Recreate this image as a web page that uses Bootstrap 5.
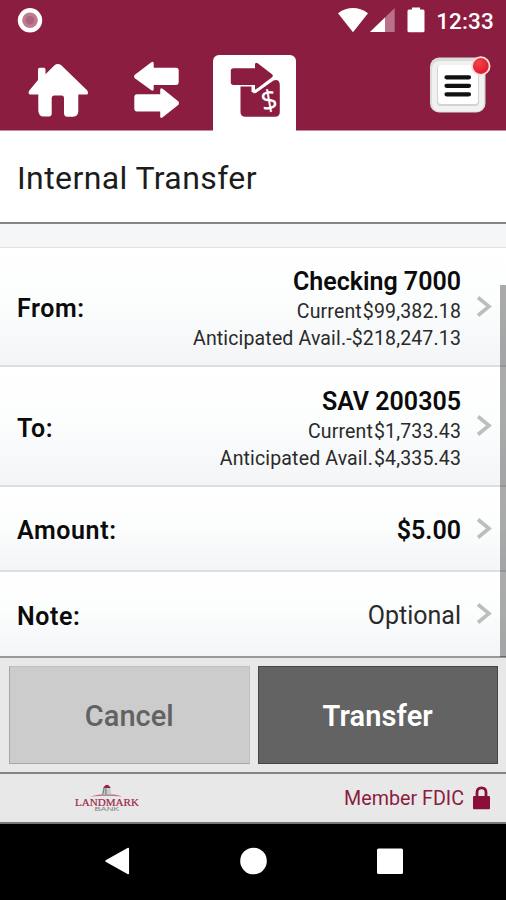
<!DOCTYPE html>
<html lang="en">
<head>
<meta charset="utf-8">
<meta name="viewport" content="width=device-width, initial-scale=1">
<title>Internal Transfer</title>
<link href="https://cdn.jsdelivr.net/npm/bootstrap@5.3.0/dist/css/bootstrap.min.css" rel="stylesheet">
<style>
body{font-family:Roboto,"Liberation Sans",sans-serif;color:#0b0b0b;background:#fff;overflow:hidden}
svg{display:block;flex:none}
.phone-screen{width:506px;height:900px}
.status-strip{height:41px;background:#8b1d40;padding:0 12px 0 17px}
.clock-text{font-size:22.5px;font-weight:500;color:#fff;letter-spacing:.15px;line-height:42px;margin-left:11px}
.app-tabs{height:90px;background:#8b1d40;border-bottom:1px solid #c58d9f;padding-left:16px;padding-right:14px}
.tab-link{width:83px;height:76px;padding:0}
.tab-current{background:#fff;border-radius:6px 6px 0 0;margin-bottom:-1px;margin-left:-1px}
.tab-gap{width:16px}
.page-head{height:93px;border-bottom:2px solid #858585}
.page-head h1{font-size:32px;font-weight:400;line-height:94px;padding-left:17px;letter-spacing:.4px;color:#1c1c1c}
.form-gap{height:24px;background:#f4f6f7;border-bottom:1px solid #e0e2e4}
.form-line{background:linear-gradient(#fff,#fcfdfd 45%,#f3f5f7);border-bottom:2px solid #dcdfe1;padding:0 14px 0 17px}
.line-from{height:119px}
.line-to{height:120px}
.line-amount{height:85px}
.line-last{height:84px;border-bottom:0}
.line-label{font-size:25px;font-weight:600;line-height:30px;letter-spacing:.6px;padding-top:5px}
.line-strong{font-size:25px;font-weight:600;line-height:32px}
.line-sub{font-size:19.5px;line-height:27px;color:#2a2a2a;letter-spacing:.15px;font-weight:400}
.line-sub span+span{margin-left:1px}
.line-sub .flush{margin-left:0!important}
.line-value{padding-top:4px}
.line-to .line-value{padding-top:5px}
.line-note{font-size:25px;line-height:30px;color:#2a2a2a;font-weight:400;padding-top:4px}
.chevron{margin-left:14px}
.scroll-thumb{right:0;top:285px;width:6px;height:372px;background:rgba(0,0,0,.33)}
.action-bar{height:118px;background:#e8e8e8;border-top:2px solid #999;border-bottom:2px solid #858585;padding:8px 8px 8px 9px;gap:8px}
.action-btn{font-size:29px;font-weight:500;border-radius:0;padding:4px 0 0;flex:1 1 0}
.btn-cancel,.btn-cancel:hover{background:#ccc;border:1px solid #a6a6a6;border-top-color:#c0c0c0;border-right-color:#c0c0c0;color:#626262}
.btn-send,.btn-send:hover{background:#636363;border:1px solid #454545;color:#fff;font-weight:600;letter-spacing:.1px}
.foot-bar{height:50px;background:#e8e8e8;border-bottom:2px solid #777;padding:0 16px 0 70px}
.fdic-text{font-size:19.7px;color:#8b1d40;font-weight:400;margin-right:9px;padding-top:1px}
.system-nav{background:#000;padding:0 103px 2px 105px}
</style>
</head>
<body>
<main class="phone-screen d-flex flex-column position-relative">
<header>
  <div class="status-strip d-flex align-items-center">
    <svg width="26" height="41" viewBox="0 0 26 41"><circle cx="13" cy="20.300" r="12.200" fill="#fff"/><circle cx="13" cy="20.300" r="7.800" fill="#bd7a91"/><circle cx="13" cy="20.300" r="4.200" fill="#a9547a" opacity=".65"/></svg>
    <svg class="ms-auto" width="88" height="41" viewBox="337 0 88 41"><path d="M338 13.200Q353 3 368 13.200L353 32.200Z" fill="#fff"/><path d="M394.700 8V32H370Z" fill="#b9708a"/><path d="M385 17.500V32H370Z" fill="#fff"/><path d="M412 7.500h8v2h3q1.500 0 1.500 1.500v20q0 1.300-1.500 1.300h-14q-1.500 0-1.500-1.300v-20q0-1.500 1.500-1.500h3z" fill="#fff"/></svg>
    <span class="clock-text">12:33</span>
  </div>
  <nav class="app-tabs d-flex align-items-end">
    <a href="#" class="tab-link" aria-label="Home"><svg width="83" height="76" viewBox="16 54 83 76"><path fill="#fff" d="M38 80V70q0-2.300 1.700-2.300H44q1.500 0 1.500 2v4.600L54.500 65.200q3.300-2.500 6.800 0L87.300 90.500q1.800 3.900-.8 4H78.300V112q-.8 4.500-5 4.700H67Q64 116.700 64 113V98q0-2.500-2-2.500H54Q51.700 95.500 51.700 98v15.500q0 3-2.700 3H43.500Q39 116.500 38.300 111V94.500H30Q27.500 94 29.300 90.500Z"/></svg></a>
    <span class="tab-gap"></span>
    <a href="#" class="tab-link" aria-label="Transfers"><svg width="83" height="76" viewBox="115 54 83 76"><path fill="#fff" d="M134.500 75L151 62.500q2.500-2 2.700.7v4.600H176q2.700 0 2.700 2.700V82q0 3-2.700 3H153.700v4q-.3 3-2.700 1L134.500 78q-1-1.500 0-3zM178.500 101.500L163 89q-2.500-2-2.800.8v4.500H137q-2.700 0-2.700 3V108.500q0 3 2.700 3h23.200v5q.3 2.500 2.800.5L178.500 104.700q1-1.700 0-3.200z"/></svg></a>
    <span class="tab-gap"></span>
    <a href="#" class="tab-link tab-current" aria-label="Internal transfer"><svg width="83" height="76" viewBox="213 55 83 76"><path fill="#8b1d40" d="M240.500 86.500H251.500V92L255.500 93.300 273.500 80.500q6-1.800 6.300 4.500V112q0 4.700-4.700 4.700H245.500q-5 0-5-4.700z"/><path fill="#8b1d40" d="M233.500 68.300H255V64.500q.2-3 2.700-1.200L272 74.200q1.700 1.500 0 3L258.500 87.500l-3.500 2.300V85H233.500q-2.700 0-2.700-2.700V71q0-2.700 2.700-2.700z"/><path d="M251.500 85.800H254.300V92.500L273.500 78.700" fill="none" stroke="#fff" stroke-width="1.400"/><text x="261" y="110.500" font-family="'Noto Sans','Open Sans',sans-serif" font-size="28.500" fill="#fff" transform="rotate(-10 269 101)">$</text></svg></a>
    <a href="#" class="ms-auto" aria-label="Menu"><svg width="64" height="76" viewBox="428 54 64 76"><defs><radialGradient id="dotFill" cx=".35" cy=".3" r=".9"><stop offset="0" stop-color="#f2434d"/><stop offset="1" stop-color="#d9121f"/></radialGradient></defs><rect x="430" y="57.500" width="55.500" height="55" rx="9" fill="#dcdcdc"/><rect x="432" y="61" width="52" height="50.500" rx="8" fill="#f1f1f1"/><rect x="437" y="65" width="42" height="41" rx="4" fill="#d2d4d4"/><rect x="438" y="65" width="40" height="39" rx="3" fill="#fff"/><path d="M446.500 77.300h22.500M446.500 85.800h22.500M446.500 94.300h22.500" stroke="#111" stroke-width="4.200" stroke-linecap="round"/><circle cx="480.800" cy="66" r="9.700" fill="#f6dede"/><circle cx="480.800" cy="66" r="7.900" fill="url(#dotFill)"/></svg></a>
  </nav>
</header>
<section class="page-head"><h1 class="m-0">Internal Transfer</h1></section>
<div class="form-gap"></div>
<section>
  <div class="form-line line-from d-flex align-items-center"><span class="line-label">From:</span><div class="line-value ms-auto text-end"><div class="line-strong">Checking 7000</div><div class="line-sub"><span>Current</span><span>$99,382.18</span></div><div class="line-sub"><span>Anticipated Avail.</span><span class="flush">-$218,247.13</span></div></div><svg class="chevron" width="17" height="24" viewBox="0 0 17 24"><path d="M3 2.500L14 11.500 3 20.500" fill="none" stroke="#bdbdbd" stroke-width="3.600"/></svg></div>
  <div class="form-line line-to d-flex align-items-center"><span class="line-label">To:</span><div class="line-value ms-auto text-end"><div class="line-strong">SAV 200305</div><div class="line-sub"><span>Current</span><span>$1,733.43</span></div><div class="line-sub"><span>Anticipated Avail.</span><span>$4,335.43</span></div></div><svg class="chevron" width="17" height="24" viewBox="0 0 17 24"><path d="M3 2.500L14 11.500 3 20.500" fill="none" stroke="#bdbdbd" stroke-width="3.600"/></svg></div>
  <div class="form-line line-amount d-flex align-items-center"><span class="line-label">Amount:</span><span class="line-strong line-value ms-auto">$5.00</span><svg class="chevron" width="17" height="24" viewBox="0 0 17 24"><path d="M3 2.500L14 11.500 3 20.500" fill="none" stroke="#bdbdbd" stroke-width="3.600"/></svg></div>
  <div class="form-line line-last d-flex align-items-center"><span class="line-label">Note:</span><span class="line-note ms-auto">Optional</span><svg class="chevron" width="17" height="24" viewBox="0 0 17 24"><path d="M3 2.500L14 11.500 3 20.500" fill="none" stroke="#bdbdbd" stroke-width="3.600"/></svg></div>
</section>
<div class="scroll-thumb position-absolute"></div>
<div class="action-bar d-flex"><button type="button" class="btn action-btn btn-cancel">Cancel</button><button type="button" class="btn action-btn btn-send">Transfer</button></div>
<footer class="foot-bar d-flex align-items-center">
  <svg width="74" height="36" viewBox="70 779 74 36"><path d="M90 795.500q8-2.500 17-2.500t16 2.500q-16-1.500-33 0z" fill="#b76f84"/><path d="M102 793.500l1.200-7q3.500-3 7 0l1.300 7z" fill="#c6cbce"/><path d="M102.800 793.500l1.200-6.500M105.800 793.500v-6" stroke="#7b858b" stroke-width="1.300"/><path d="M103.200 787q3.800-6.500 7.600 0z" fill="#9c1f3f"/><text x="75" y="804.500" font-family="'Liberation Serif',serif" font-size="11" fill="#9c2648" stroke="#9c2648" stroke-width=".2" textLength="64" lengthAdjust="spacingAndGlyphs">LANDMARK</text><text x="94.500" y="810.300" font-family="'Liberation Sans',sans-serif" font-size="5.200" fill="#7d8387" textLength="25" lengthAdjust="spacingAndGlyphs">BANK</text></svg>
  <span class="fdic-text ms-auto">Member FDIC</span>
  <svg width="17" height="26" viewBox="0 0 17 26"><path d="M4 12V7.500q0-4.700 4.500-4.700T13 7.500V12" fill="none" stroke="#8b1038" stroke-width="2.800"/><rect y="11" width="17" height="13.200" rx="1" fill="#8b1038"/></svg>
</footer>
<div class="system-nav flex-fill d-flex align-items-center justify-content-between">
  <svg width="25" height="28" viewBox="0 0 25 28"><path d="M23.300 1.500V26.500L1 14z" fill="#fff" stroke="#fff" stroke-width="1.500" stroke-linejoin="round"/></svg>
  <svg width="28" height="28" viewBox="0 0 28 28"><circle cx="13.500" cy="14" r="13.300" fill="#fff"/></svg>
  <svg width="26" height="28" viewBox="0 0 26 28"><rect y="1.500" width="26" height="25.500" rx="1.500" fill="#fff"/></svg>
</div>
</main>
<script src="https://cdn.jsdelivr.net/npm/bootstrap@5.3.0/dist/js/bootstrap.bundle.min.js"></script>
</body>
</html>
